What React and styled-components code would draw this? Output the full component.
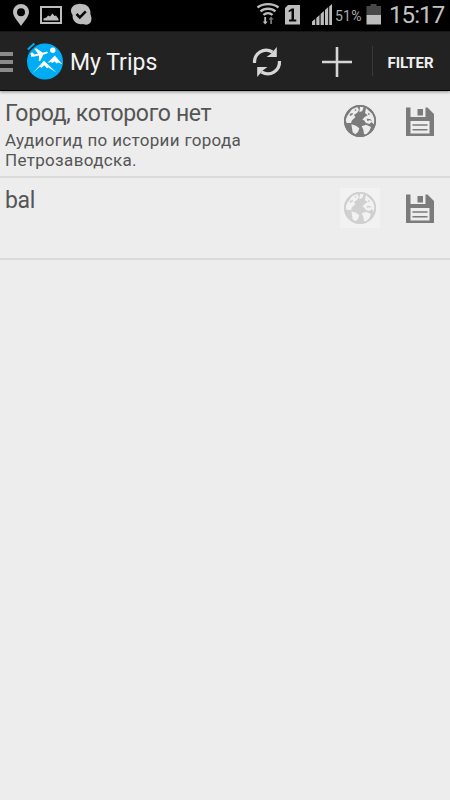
import React from "react";
import styled, { createGlobalStyle } from "styled-components";

const GlobalStyle = createGlobalStyle`
    body {
        margin: 0;
        background-color: #ededed;
        font-family: Roboto, "Noto Sans", sans-serif;
    }
    svg {
        display: block;
        flex: none;
    }
`

const Screen = styled.div`
    display: flex;
    flex-direction: column;
    width: 450px;
    height: 800px;
    overflow: hidden;
    background-color: #ededed;
`

const StatusBar = styled.div`
    display: flex;
    justify-content: space-between;
    box-sizing: border-box;
    height: 31px;
    flex: none;
    background-color: #000;
    color: #bdbdbd;
`

const StatusGroup = styled.div`
    display: flex;
    height: 30px;
`

const Battery = styled.span`
    width: 30px;
    padding-top: 8px;
    font-size: 14px;
    line-height: 16px;
    letter-spacing: 0.2px;
    color: #ababab;
`

const Clock = styled.span`
    width: 67px;
    padding-left: 6px;
    box-sizing: border-box;
    font-size: 24px;
    line-height: 30px;
    letter-spacing: -0.9px;
    white-space: nowrap;
    color: #c2c2c2;
`

const ActionBar = styled.div`
    display: flex;
    align-items: center;
    box-sizing: border-box;
    height: 60px;
    flex: none;
    border-top: 1px solid #161616;
    border-bottom: 1px solid #000;
    background-color: #222;
    color: #f3f3f3;
    z-index: 1;
    box-shadow: 0 1px 3px rgba(0, 0, 0, 0.4);
`

const MenuIcon = styled.div`
    display: flex;
    flex-direction: column;
    gap: 4px;
    width: 13px;
    margin: 2px 12px 0 0;
`

const MenuLine = styled.div`
    height: 4px;
    background-color: #8b8b8b;
`

const Title = styled.h1`
    width: 182px;
    margin: 3px 0 0 5px;
    font-size: 23px;
    font-weight: 400;
    line-height: 30px;
    letter-spacing: 0;
`

const ActionIcon = styled.div`
    display: flex;
    width: ${props => props.$width}px;
    margin-top: 1px;
`

const Divider = styled.div`
    width: 1px;
    height: 30px;
    background-color: #393939;
`

const FilterButton = styled.button`
    flex: 1;
    padding: 3px 2px 0 0;
    border: 0;
    background: none;
    color: #f0f0f0;
    font-family: inherit;
    font-size: 15px;
    font-weight: 700;
    line-height: 20px;
    letter-spacing: -0.1px;
`

const TripRow = styled.div`
    display: flex;
    box-sizing: border-box;
    height: ${props => props.$height}px;
    padding: 8px 0 0 5px;
    border-bottom: 2px solid #dadada;
    color: #555;
`

const TripText = styled.div`
    width: 335px;
    flex: none;
`

const TripName = styled.h2`
    margin: 0;
    font-size: 23px;
    font-weight: 400;
    line-height: 30px;
    letter-spacing: -0.33px;
`

const TripDescription = styled.p`
    width: 270px;
    margin: 1px 0 0;
    font-size: 17px;
    line-height: 20px;
    letter-spacing: 0.33px;
`

const IconBox = styled.div`
    display: flex;
    flex: none;
    align-items: center;
    justify-content: center;
    width: 40px;
    height: 40px;
    margin: 2px 20px 0 0;
    background-color: ${props => props.$faded ? "#f2f2f2" : "transparent"};
`

const trips = [
    {
        name: "Город, которого нет",
        description: "Аудиогид по истории города Петрозаводска.",
        height: 87,
    },
    { name: "bal", description: "", height: 82, faded: true },
]

const NotificationIcons = () => (
    <svg width="100" height="30" viewBox="0 0 100 30" fill="#bdbdbd">
        <path fillRule="evenodd" d="M21 4a8 8 0 0 0-8 8c0 5 5 9 8 14 3-5 8-9 8-14a8 8 0 0 0-8-8zm0 4.2a4 4 0 1 1 0 8 4 4 0 0 1 0-8z" />
        <path fillRule="evenodd" d="M40 6h22v18H40zM42 8v14h18V8z" />
        <path d="M43.500 20.500v-2l3-1 1.500-2 2 1 2.500-3 2 2.500 1.500-.5 2.500 3.500v1.500z" />
        <path d="M77 4.200q3-.8 6 0c5 .5 8 5 7.400 9.500q1.600 4 .8 7.300c-1.500 4-5 4.200-8.200 3-6 1.200-11-3-10.400-9-3.500-4.500-1-9.800 4.400-10.800z" />
        <path d="M76.500 14l3.300 3.300 6-6" fill="none" stroke="#080808" strokeWidth="2.600" />
    </svg>
)

const SignalIcons = () => (
    <svg width="80" height="30" viewBox="255 0 80 30" fill="#bdbdbd">
        <g fill="none" stroke="#bdbdbd" strokeWidth="2.400">
            <path d="M257.500 7.500c5.500-4.500 15.500-4.500 21 0" />
            <path d="M260.500 11.400c4-3.600 11-3.600 15 0" />
            <path d="M263.500 15c2.500-2.500 6.500-2.500 9 0" />
        </g>
        <path d="M264.300 17h1.800v4.500h1.600l-2.500 3-2.500-3h1.600z" />
        <path d="M270.200 24v-4.500h-1.600l2.500-3 2.500 3h-1.600V24z" fill="#777" />
        <path d="M288 5h12v19.500h-15V8z" />
        <path d="M288.700 10.500l3-2h2.300v11h2.300v2h-7.300v-2h2.500V11l-2.800 1.300z" fill="#080808" />
        <path d="M312 21.500l3.200-2.500v6H312zM316.300 18l3.200-3v10h-3.200zM320.600 14l3.300-3v14h-3.300zM325 10l3.200-3v18H325zM329.200 6.500l2.800-2.500v21h-2.800z" />
    </svg>
)

const BatteryIcon = () => (
    <svg width="18" height="30" viewBox="0 0 18 30">
        <path d="M1.500 6h4V4h6v2H16v9H1.500z" fill="#484848" />
        <path d="M1.500 15H16v9.500H1.500z" fill="#bdbdbd" />
    </svg>
)

const Logo = () => (
    <svg width="40" height="40" viewBox="0 0 40 40">
        <circle cx="20" cy="20.500" r="18" fill="#00adf4" />
        <path d="M2.800 8.500l6.500-6" stroke="#00adf4" strokeWidth="2" />
        <path d="M3 12l8-7.500" stroke="#144b62" strokeWidth="1" />
        <g fill="#fff">
            <path d="M5.500 12l2-.6 2 2 3.500-.6-3.800-5 2.300-.3 6.400 4.200 3.300-.9c2-.4 2.500 1 .6 1.700l-3.500 1.300-3 6-1.500.3.200-5.500-4.300.8-3.500.3z" />
            <circle cx="27.800" cy="9.300" r="2.700" />
            <path d="M7.200 32.500L19 19.800l12.500 11.700-8-5-1.500.8-2.800-3-2.500 2.500-2-1z" />
            <path d="M22.600 21.800l7.200-7.300 7.500 8.700-4-1.700-1.700 1-2-2-2.300 1.500-1.600-1z" />
        </g>
    </svg>
)

const RefreshIcon = () => (
    <svg width="30" height="32" viewBox="0 0 30 32" fill="none" stroke="#d6d6d6">
        <path d="M2.500 17C2 7 12 1 20.500 6" strokeWidth="3.200" />
        <path d="M27.500 15C28 25 18 31 9.500 26" strokeWidth="3.200" />
        <path d="M24.800 1v10H14.500l4.500-3.300zM5.200 31V21h10.300l-4.500 3.300z" fill="#d6d6d6" stroke="none" />
    </svg>
)

const PlusIcon = () => (
    <svg width="30" height="30" viewBox="0 0 30 30" stroke="#d6d6d6" strokeWidth="2.600">
        <path d="M15 0v30M0 15h30" />
    </svg>
)

const GlobeIcon = ({ faded }) => {
    const cor = faded ? "#d0d0d0" : "#7b7b7b"

    return (
        <svg width="32" height="32" viewBox="0 0 96 96">
            <circle cx="48" cy="48" r="48" fill={cor} />
            <g fill={faded ? "#f2f2f2" : "#ededed"}>
                <path d="M10 32L24 13l16-7 5 9-6 9-9 5 4 8-10 9-3 8-13 0-3-9z" />
                <path d="M48 5l11 2-4 11-9 4z" />
                <path d="M66 9l19 18 6 15-1 16-8-7-5 6-11-3-6-8-5-2 7-8 9-5-8-7z" />
                <path d="M22 58l14 4 10 8-4 11-8 7-8-6-2-12z" />
                <path d="M53 64l13-5 15 7-5 12-10 11-6-2-2-13z" />
            </g>
            <path d="M18 26l9-2-2 6-8 3zM33 12l5 3-6 4zM68 41l10 1 7 5-8-1-7 2zM73 23l6 5-7 2z" fill={cor} />
            <circle cx="48" cy="48" r="46" fill="none" stroke={cor} strokeWidth="4" />
        </svg>
    )
}

const SaveIcon = () => (
    <svg width="28" height="29" viewBox="0 0 28 29">
        <path fillRule="evenodd" d="M0 .5h4.500V10h15V.5h2L28 7v22H0zM4.500 14v12.500h19V14z" fill="#7b7b7b" />
        <path d="M11.500 2h5.500v6.500h-5.500zM6.500 17.300h15v1.500h-15zM6.500 22h15v1.500h-15z" fill="#7b7b7b" />
    </svg>
)

const App = () => (
    <Screen>
        <GlobalStyle />
        <StatusBar>
            <StatusGroup>
                <NotificationIcons />
            </StatusGroup>
            <StatusGroup>
                <SignalIcons />
                <Battery>51%</Battery>
                <BatteryIcon />
                <Clock>15:17</Clock>
            </StatusGroup>
        </StatusBar>
        <ActionBar>
            <MenuIcon>
                <MenuLine />
                <MenuLine />
                <MenuLine />
            </MenuIcon>
            <Logo />
            <Title>My Trips</Title>
            <ActionIcon $width={70}><RefreshIcon /></ActionIcon>
            <ActionIcon $width={50}><PlusIcon /></ActionIcon>
            <Divider />
            <FilterButton>FILTER</FilterButton>
        </ActionBar>
        {trips.map((trip) => (
            <TripRow key={trip.name} $height={trip.height}>
                <TripText>
                    <TripName>{trip.name}</TripName>
                    <TripDescription>{trip.description}</TripDescription>
                </TripText>
                <IconBox $faded={trip.faded}>
                    <GlobeIcon faded={trip.faded} />
                </IconBox>
                <IconBox>
                    <SaveIcon />
                </IconBox>
            </TripRow>
        ))}
    </Screen>
)

export default App
